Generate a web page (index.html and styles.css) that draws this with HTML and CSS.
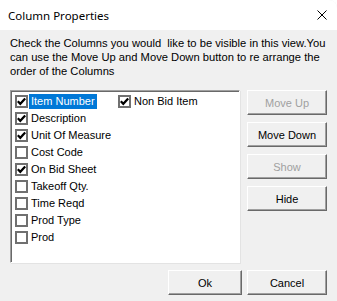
FILE: index.html
```html
<!DOCTYPE html>
<html>
  <head>
    <title>Column Properties</title>
    <link rel="stylesheet" href="styles.css">
  </head>
  <body>
    <div class="window">
      <div class="titlebar">
        <span class="title">Column Properties</span>
        <svg class="close" width="10" height="10" viewBox="0 0 10 10">
          <path d="M0.5 0.5 L9.5 9.5 M9.5 0.5 L0.5 9.5" stroke="#000" stroke-width="1" fill="none" />
        </svg>
      </div>
      <div class="content">
        <p class="intro">Check the Columns you would&nbsp; like to be visible in this view.You can use the Move Up and Move Down button to re arrange the order of the Columns</p>
        <div class="main">
          <div class="listbox">
            <div class="columns">
              <div class="item"><span class="box checked"></span><span class="label selected">Item Number</span></div>
              <div class="item"><span class="box checked"></span><span class="label">Description</span></div>
              <div class="item"><span class="box checked"></span><span class="label">Unit Of Measure</span></div>
              <div class="item"><span class="box"></span><span class="label">Cost Code</span></div>
              <div class="item"><span class="box checked"></span><span class="label">On Bid Sheet</span></div>
              <div class="item"><span class="box"></span><span class="label">Takeoff Qty.</span></div>
              <div class="item"><span class="box"></span><span class="label">Time Reqd</span></div>
              <div class="item"><span class="box"></span><span class="label">Prod Type</span></div>
              <div class="item"><span class="box"></span><span class="label">Prod</span></div>
              <div class="item"><span class="box checked"></span><span class="label">Non Bid Item</span></div>
            </div>
          </div>
          <div class="side">
            <button class="btn" disabled>Move Up</button>
            <button class="btn">Move Down</button>
            <button class="btn" disabled>Show</button>
            <button class="btn">Hide</button>
          </div>
        </div>
        <div class="footer">
          <button class="btn ok">Ok</button>
          <button class="btn cancel">Cancel</button>
        </div>
      </div>
    </div>
  </body>
</html>
```
FILE: styles.css
```css
body {
  margin: 0;
  background-color: #ffffff;
  font-family: "Liberation Sans", Arial, sans-serif;
  font-size: 11px;
  color: #000000;
}
.window {
  width: 337px;
  height: 301px;
  background-color: #f0f0f0;
  border-top-right-radius: 8px;
  overflow: hidden;
}
.titlebar {
  height: 30px;
  background-color: #ffffff;
  display: flex;
  align-items: center;
  justify-content: space-between;
  padding: 0 10px 0 8px;
}
.title {
  font-family: "Noto Sans", sans-serif;
  font-size: 11.5px;
  color: #000000;
}
.close {
  display: block;
}
.content {
  padding: 6px 10px 0 10px;
}
.intro {
  margin: 0;
  line-height: 14px;
  height: 42px;
  font-size: 11.2px;
}
.main {
  display: flex;
  gap: 7px;
  margin-top: 12px;
}
.listbox {
  width: 227px;
  height: 169px;
  background-color: #ffffff;
  border-top: 1px solid #a0a0a0;
  border-left: 1px solid #a0a0a0;
  border-right: 1px solid #ffffff;
  border-bottom: 1px solid #ffffff;
  box-shadow: inset 1px 1px 0 #696969, 1px 1px 0 #e3e3e3;
  padding: 2px 0 0 2px;
}
.columns {
  display: grid;
  grid-auto-flow: column;
  grid-template-rows: repeat(9, 17px);
  grid-template-columns: 103px 103px;
}
.item {
  display: flex;
  align-items: center;
  padding-left: 2px;
}
.box {
  width: 13px;
  height: 13px;
  box-sizing: border-box;
  border: 2px solid #707070;
  background-color: #ffffff;
  flex-shrink: 0;
}
.box.checked {
  background: #ffffff url("data:image/svg+xml;utf8,<svg xmlns='http://www.w3.org/2000/svg' width='9' height='9' viewBox='0 0 9 9'><path d='M0.8 4.2 L3.3 6.8 L8.2 1.4' stroke='black' stroke-width='2.2' fill='none'/></svg>") no-repeat center;
}
.label {
  margin-left: 1px;
  padding: 1px 2px;
  line-height: 13px;
  white-space: nowrap;
}
.selected {
  background-color: #0078d7;
  color: #ffffff;
}
.side {
  display: flex;
  flex-direction: column;
  gap: 7px;
}
.btn {
  width: 80px;
  height: 25px;
  font-family: "Liberation Sans", Arial, sans-serif;
  font-size: 11px;
  color: #000000;
  background-color: #f0f0f0;
  border-top: 1px solid #ffffff;
  border-left: 1px solid #ffffff;
  border-right: 1px solid #696969;
  border-bottom: 1px solid #696969;
  box-shadow: inset -1px -1px 0 #a0a0a0;
  padding: 0;
  margin: 0;
}
.btn:disabled {
  color: #a0a0a0;
}
.footer {
  display: flex;
  justify-content: flex-end;
  gap: 5px;
  margin-top: 7px;
}
.ok {
  width: 74px;
}
```
